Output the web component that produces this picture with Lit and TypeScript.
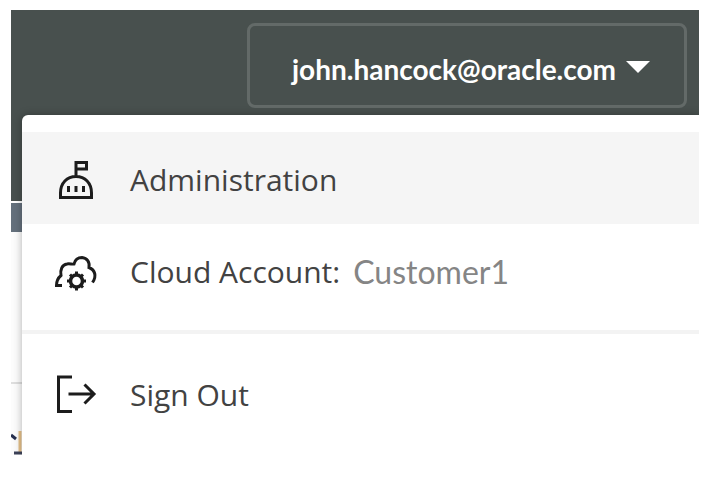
import { LitElement, html, css, svg } from "lit";
import { customElement } from "lit/decorators.js";

const adminIcon = svg`
  <path d="M6.5 37.5 V33 C6.5 23 13 16.5 22 16.5 C31 16.5 37.5 23 37.5 33 V37.5 Z M22 17 V2.5 H32.5 V9 H22"/>
  <path d="M14.5 26 V32 M22 26 V32 M29.5 26 V32"/>`;

const cloudIcon = svg`
  <path d="M8 33.5 H2.5 C2.5 29 4 26 7 23.5 C6 18 8 12.5 13 12 C16 11.5 18 12.5 20 12 C21 8 24 5.5 28 5.5 C33 6 36 10 35 15.5 C41 18 43 24 38.5 30.5"/>
  <circle cx="22.5" cy="29" r="6" stroke-width="3.5"/>
  <path d="M22.5 23 V19.5 M22.5 35 V38.5 M16.5 29 H13 M28.5 29 H32 M18 24.5 L16 22.5 M27 24.5 L29 22.5 M18 33.5 L16 35.5 M27 33.5 L29 35.5"/>`;

const signOutIcon = svg`
  <path d="M18 2 H4.5 V36.5 H18 M14.5 19 H40 M30.5 9.5 L40 19 L30.5 28.5"/>`;

@customElement("app-root")
export class AppRoot extends LitElement {
  static styles = css`
    :host {
      display: block;
      padding: 10px 13px 36px 11px;
      background: #fff;
      font-family: "Open Sans", "Noto Sans", sans-serif;
      color: #424242;
    }
    .frame {
      display: grid;
      overflow: hidden;
    }
    .page,
    .overlay {
      grid-area: 1 / 1;
      min-width: 0;
    }
    .page {
      display: flex;
      flex-direction: column;
    }
    .header {
      height: 191px;
      background: #48504e;
    }
    .strip {
      height: 29px;
      margin-top: 2px;
      background: #64707c;
    }
    .body {
      flex: 1;
      display: flex;
      flex-direction: column;
      justify-content: flex-end;
      background: #fcfcfc;
    }
    .card {
      height: 71px;
      border-top: 2px solid #dedede;
      display: flex;
      align-items: flex-end;
    }
    .scrap {
      width: 13px;
      height: 24px;
    }
    .overlay {
      display: flex;
      flex-direction: column;
      align-items: flex-end;
      padding: 13px 0 0 11px;
    }
    .account {
      box-sizing: border-box;
      height: 85px;
      width: 440px;
      margin-right: 12px;
      padding: 6px 34px 0 42px;
      display: flex;
      align-items: center;
      justify-content: space-between;
      border: 3px solid #636a68;
      border-radius: 8px;
      background: transparent;
      color: #fff;
      font: 700 28px/36px Lato, sans-serif;
    }
    .caret {
      width: 24px;
      height: 12px;
      margin-bottom: 4px;
      fill: #fff;
    }
    .menu {
      align-self: stretch;
      box-sizing: border-box;
      margin-top: 7px;
      padding: 17px 0 16px;
      background: #fff;
      border-radius: 6px 0 0 0;
      box-shadow: 0 0 8px rgba(0, 0, 0, 0.3);
    }
    .item {
      box-sizing: border-box;
      width: 100%;
      height: 92px;
      display: flex;
      align-items: center;
      padding: 4px 0 0 32px;
      border: 0;
      background: transparent;
      color: inherit;
      font: 400 30px/40px "Open Sans", "Noto Sans", sans-serif;
      text-align: left;
      white-space: pre;
    }
    .item.active {
      background: #f5f5f5;
    }
    .icon {
      width: 44px;
      height: 40px;
      margin-right: 32px;
      fill: none;
      stroke: #1c1c1c;
      stroke-width: 3;
    }
    .value {
      margin-left: 13px;
      font-family: Lato, sans-serif;
      font-size: 32px;
      color: #858585;
    }
    .rule {
      height: 4px;
      margin: 14px 0 13px;
      border: 0;
      background: #f3f3f3;
    }
  `;

  private item(icon: unknown, label: string, value = "", active = false) {
    return html`<button class="item ${active ? "active" : ""}" role="menuitem"><svg class="icon" viewBox="0 0 44 40" aria-hidden="true">${icon}</svg><span>${label}</span>${value ? html`<span class="value">${value}</span>` : ""}</button>`;
  }

  render() {
    return html`
      <div class="frame">
        <div class="page">
          <div class="header"></div>
          <div class="strip"></div>
          <div class="body">
            <div class="card">
              <svg class="scrap" viewBox="0 0 13 24" aria-hidden="true">
                <path d="M0 4 L5 8" stroke="#26304f" stroke-width="3" />
                <path d="M9 0 V22" stroke="#e8c28a" stroke-width="3" />
                <path d="M3 22 H13" stroke="#3c4258" stroke-width="3" />
              </svg>
            </div>
          </div>
        </div>
        <div class="overlay">
          <button class="account" aria-haspopup="menu" aria-expanded="true">
            <span>john.hancock@oracle.com</span>
            <svg class="caret" viewBox="0 0 24 12" aria-hidden="true"><path d="M0 0 H24 L12 12 Z" /></svg>
          </button>
          <div class="menu" role="menu">
            ${this.item(adminIcon, "Administration", "", true)}
            ${this.item(cloudIcon, "Cloud Account:", "Customer1")}
            <hr class="rule" />
            ${this.item(signOutIcon, "Sign Out")}
          </div>
        </div>
      </div>
    `;
  }
}
